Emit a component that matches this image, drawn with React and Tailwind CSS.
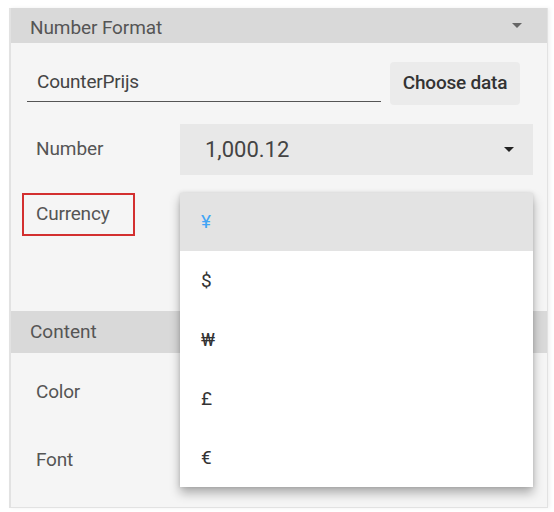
export default function App() {
  const items = ["¥", "$", "₩", "£", "€"];
  return (
    <div
      className="w-[554px] h-[512px] bg-white pt-[8px] pl-[9px] pr-[6px] overflow-hidden"
      style={{ fontFamily: "Roboto, 'Noto Sans', sans-serif" }}
    >
      <div className="relative h-[500px] bg-[#f5f5f5] border-l-2 border-r border-b border-[#e2e2e2] shadow-[2px_0_4px_rgba(0,0,0,0.06)]">
        {/* header */}
        <div className="h-[35px] bg-[#d9d9d9] flex items-center justify-between pl-[19px] pr-[25px]">
          <span className="text-[19px] leading-none text-[#555] tracking-[-0.1px] pt-[3px]">Number Format</span>
          <span className="w-0 h-0 border-l-[5px] border-r-[5px] border-t-[5px] border-l-transparent border-r-transparent border-t-[#666]" />
        </div>

        {/* data row */}
        <div className="flex items-start pl-[16px] mt-[19px]">
          <div className="w-[354px] h-[40px] border-b border-[#555] flex items-center pl-[10px]">
            <span className="text-[19px] text-[#444] tracking-[-0.2px] pt-[1px]">CounterPrijs</span>
          </div>
          <button className="ml-[9px] w-[130px] h-[43px] rounded-[4px] bg-[#ebebeb] text-[19px] font-medium text-[#333] tracking-[-0.2px]">
            Choose data
          </button>
        </div>

        {/* number row */}
        <div className="flex items-center mt-[19px] h-[51px]">
          <span className="w-[169px] pl-[25px] text-[19px] text-[#555] tracking-[-0.1px]">Number</span>
          <div className="w-[353px] h-[51px] bg-[#e8e8e8] flex items-center justify-between pl-[25px] pr-[19px]">
            <span className="text-[22px] text-[#444]">1,000.12</span>
            <span className="w-0 h-0 border-l-[5px] border-r-[5px] border-t-[5px] border-l-transparent border-r-transparent border-t-[#222]" />
          </div>
        </div>

        {/* currency row */}
        <div className="flex items-center mt-[18px] h-[43px] pl-[11px]">
          <div className="w-[113px] h-[43px] border-2 border-[#d32f2f] flex items-center pl-[12px]">
            <span className="text-[19px] text-[#555] tracking-[-0.2px]">Currency</span>
          </div>
        </div>

        {/* content header */}
        <div className="mt-[75px] h-[42px] bg-[#d9d9d9] flex items-center pl-[19px]">
          <span className="text-[19px] text-[#555]">Content</span>
        </div>

        <div className="flex items-center h-[36px] mt-[21px] pl-[25px]">
          <span className="text-[19px] text-[#555] tracking-[-0.2px]">Color</span>
        </div>
        <div className="flex items-center h-[36px] mt-[32px] pl-[25px]">
          <span className="text-[19px] text-[#555] tracking-[-0.2px]">Font</span>
        </div>

        {/* dropdown menu overlay */}
        <div className="absolute left-[169px] top-[185px] w-[353px] bg-white shadow-[0_6px_10px_rgba(0,0,0,0.3),0_0_4px_rgba(0,0,0,0.12)]">
          {items.map((s, i) => (
            <div
              key={s}
              className={
                i === 0
                  ? "h-[58px] bg-[#e3e3e3] flex items-center pl-[21px] text-[19px] text-[#42a5f5]"
                  : "h-[59px] bg-white flex items-center pl-[21px] pt-[2px] text-[19px] text-[#333]"
              }
            >
              {s}
            </div>
          ))}
        </div>
      </div>
    </div>
  );
}
